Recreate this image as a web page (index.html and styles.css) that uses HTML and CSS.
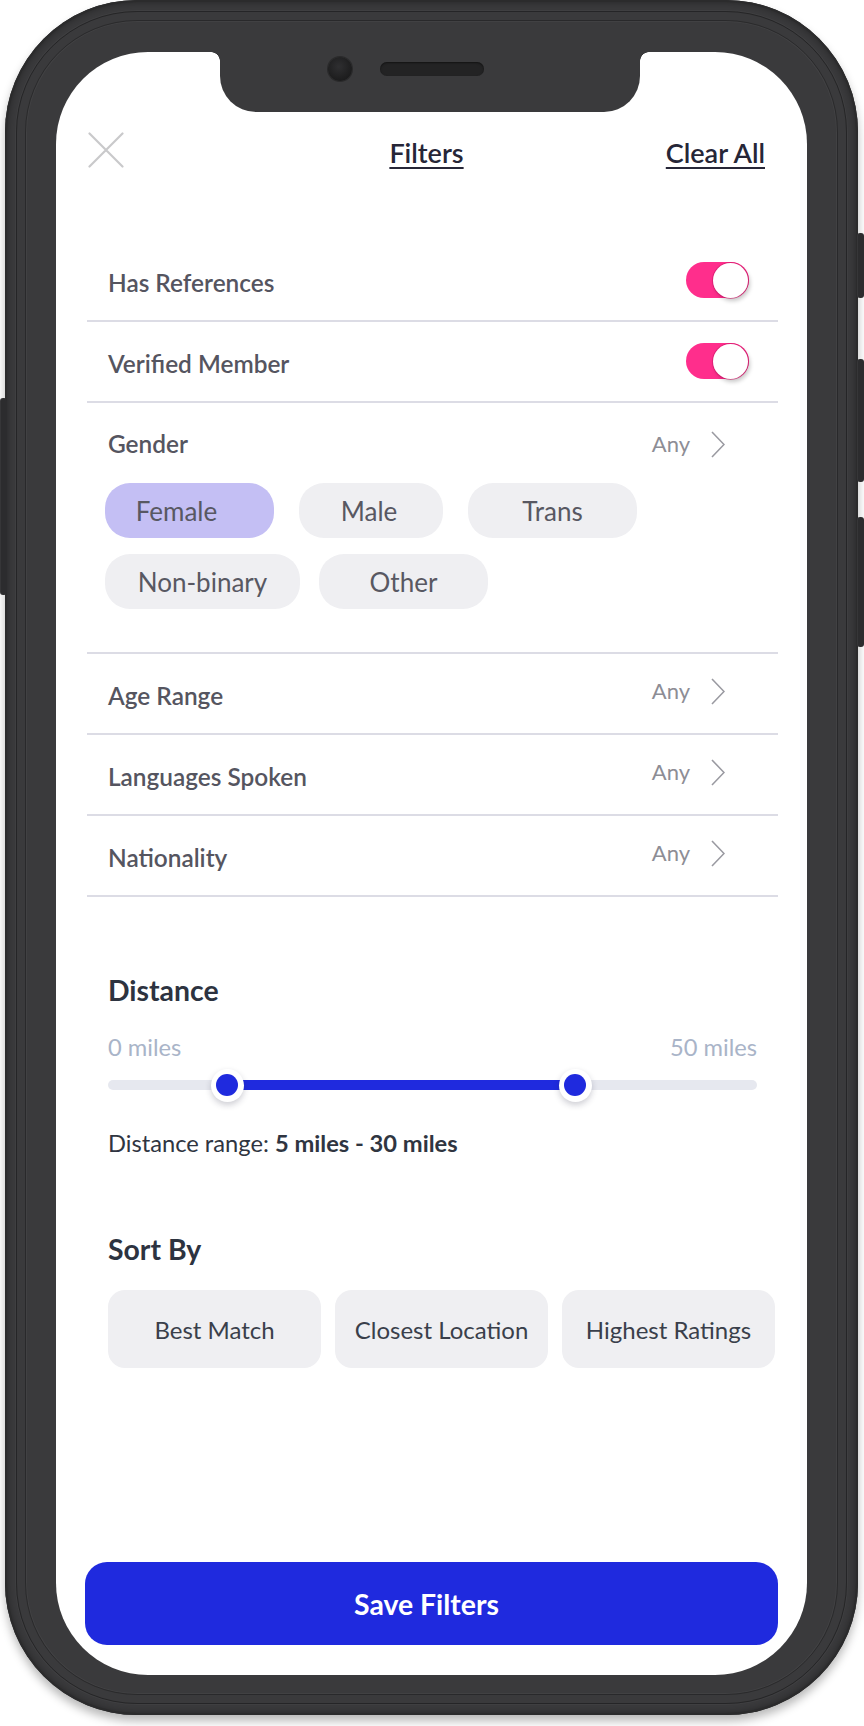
FILE: index.html
```html
<!DOCTYPE html>
<html lang="en">
<head>
<meta charset="utf-8">
<title>Filters</title>
<link rel="stylesheet" href="styles.css">
</head>
<body>
<div class="stage">
  <div class="phone">
    <span class="side-btn side-left"></span>
    <span class="side-btn side-r1"></span>
    <span class="side-btn side-r2"></span>
    <span class="side-btn side-r3"></span>
    <div class="screen">
      <div class="notch"><span class="camera"></span><span class="speaker"></span></div>

      <header class="topbar">
        <svg class="close" width="36" height="36" viewBox="0 0 36 36" aria-label="Close">
          <path d="M1.5 1.5 L34.5 34.5 M34.5 1.5 L1.5 34.5" fill="none" stroke="#c9c9cb" stroke-width="2.2" stroke-linecap="round"/>
        </svg>
        <span class="title">Filters</span>
        <span class="clear">Clear All</span>
      </header>

      <ul class="list">
        <li class="row">
          <span class="label">Has References</span>
          <span class="toggle"><span class="knob"></span></span>
        </li>
        <li class="row">
          <span class="label">Verified Member</span>
          <span class="toggle"><span class="knob"></span></span>
        </li>
        <li class="group">
          <div class="row row-head">
            <span class="label">Gender</span>
            <span class="value">Any
              <svg class="chev" width="14" height="27" viewBox="0 0 14 27"><path d="M1 1 L13 13.5 L1 26" fill="none" stroke="#9a9aa1" stroke-width="1.6"/></svg>
            </span>
          </div>
          <div class="chips">
            <div class="chip-row chip-row-1">
              <span class="chip chip-selected chip-female">Female</span>
              <span class="chip chip-male">Male</span>
              <span class="chip chip-trans">Trans</span>
            </div>
            <div class="chip-row chip-row-2">
              <span class="chip chip-nonbinary">Non-binary</span>
              <span class="chip chip-other">Other</span>
            </div>
          </div>
        </li>
        <li class="row">
          <span class="label">Age Range</span>
          <span class="value value-raised">Any
            <svg class="chev" width="14" height="27" viewBox="0 0 14 27"><path d="M1 1 L13 13.5 L1 26" fill="none" stroke="#9a9aa1" stroke-width="1.6"/></svg>
          </span>
        </li>
        <li class="row">
          <span class="label">Languages Spoken</span>
          <span class="value value-raised">Any
            <svg class="chev" width="14" height="27" viewBox="0 0 14 27"><path d="M1 1 L13 13.5 L1 26" fill="none" stroke="#9a9aa1" stroke-width="1.6"/></svg>
          </span>
        </li>
        <li class="row">
          <span class="label">Nationality</span>
          <span class="value value-raised">Any
            <svg class="chev" width="14" height="27" viewBox="0 0 14 27"><path d="M1 1 L13 13.5 L1 26" fill="none" stroke="#9a9aa1" stroke-width="1.6"/></svg>
          </span>
        </li>
      </ul>

      <section class="section distance">
        <h2 class="heading">Distance</h2>
        <div class="range-labels"><span>0 miles</span><span>50 miles</span></div>
        <div class="slider">
          <div class="track">
            <span class="fill" style="left:18.34%;width:53.62%"></span>
            <span class="thumb" style="left:18.34%"></span>
            <span class="thumb" style="left:71.96%"></span>
          </div>
        </div>
        <p class="range-text">Distance range: <b>5 miles - 30 miles</b></p>
      </section>

      <section class="section sort">
        <h2 class="heading">Sort By</h2>
        <div class="sort-options">
          <span class="sort-btn">Best Match</span>
          <span class="sort-btn">Closest Location</span>
          <span class="sort-btn">Highest Ratings</span>
        </div>
      </section>

      <button class="save" type="button">Save Filters</button>
    </div>
  </div>
</div>
</body>
</html>
```

FILE: styles.css
```css
* { box-sizing: border-box; }

html, body {
  margin: 0;
  padding: 0;
  background: #ffffff;
}

body {
  width: 864px;
  height: 1726px;
  overflow: hidden;
  font-family: "Lato", "Liberation Sans", sans-serif;
}

.stage {
  padding-left: 5px;
}

.phone {
  position: relative;
  width: 853px;
  height: 1715px;
  padding: 52px 51px 40px 51px;
  border-radius: 132px;
  background: #3a3a3c;
  box-shadow:
    inset 0 0 0 2px #2b2b2c,
    inset 0 0 10px rgba(0, 0, 0, 0.55),
    0 6px 10px rgba(0, 0, 0, 0.28);
}

.phone::before {
  content: "";
  position: absolute;
  inset: 11px;
  border-radius: 121px;
  border: 1px solid rgba(0, 0, 0, 0.35);
  box-shadow: 0 0 0 1px rgba(255, 255, 255, 0.03);
  pointer-events: none;
}

.phone::after {
  content: "";
  position: absolute;
  inset: 20px;
  border-radius: 112px;
  border: 1.5px solid rgba(0, 0, 0, 0.28);
  box-shadow: inset 0 0 0 1px rgba(255, 255, 255, 0.04);
  pointer-events: none;
}

.side-btn {
  position: absolute;
  width: 7px;
  background: #2c2c2e;
  border-radius: 3px;
  box-shadow: inset 1px 0 1px rgba(255, 255, 255, 0.06);
}
.side-left { left: -5px; top: 398px; height: 197px; }
.side-r1 { right: -6px; top: 233px; height: 65px; }
.side-r2 { right: -6px; top: 359px; height: 123px; }
.side-r3 { right: -6px; top: 517px; height: 130px; }

.screen {
  position: relative;
  z-index: 1;
  width: 751px;
  height: 1623px;
  background: #ffffff;
  border-radius: 92px;
  overflow: hidden;
  display: flex;
  flex-direction: column;
}

/* notch */
.notch {
  position: absolute;
  left: 164px;
  top: 0;
  width: 420px;
  height: 60px;
  background: #3a3a3c;
  border-radius: 0 0 36px 36px;
}
.notch::before,
.notch::after {
  content: "";
  position: absolute;
  top: 0;
  width: 9px;
  height: 9px;
}
.notch::before {
  left: -9px;
  background: radial-gradient(circle at 0 100%, transparent 8.5px, #3a3a3c 9px);
}
.notch::after {
  right: -9px;
  background: radial-gradient(circle at 100% 100%, transparent 8.5px, #3a3a3c 9px);
}
.camera {
  position: absolute;
  left: 108px;
  top: 5px;
  width: 24px;
  height: 24px;
  border-radius: 50%;
  background: radial-gradient(circle at 45% 40%, #2f2f31 0, #1f1f20 60%, #151516 100%);
  box-shadow: 0 0 0 1px #2a2a2b;
}
.speaker {
  position: absolute;
  left: 160px;
  top: 10px;
  width: 104px;
  height: 14px;
  border-radius: 7px;
  background: #232324;
  box-shadow: inset 0 1px 2px rgba(0, 0, 0, 0.5);
}

/* header */
.topbar {
  display: grid;
  grid-template-columns: 1fr auto 1fr;
  align-items: center;
  height: 36px;
  margin-top: 79px;
  padding: 0 42px 0 32px;
}
.close { display: block; }
.title,
.clear {
  font-size: 27px;
  font-weight: 600;
  color: #262637;
  text-decoration: underline;
  text-decoration-thickness: 2px;
  text-underline-offset: 4px;
  line-height: 30px;
  padding-top: 7px;
}
.clear { justify-self: end; }

/* list */
.list {
  list-style: none;
  margin: 74px 29px 0 31px;
  padding: 0;
}
.row {
  display: flex;
  align-items: center;
  justify-content: space-between;
  height: 81px;
  padding: 3px 29px 0 21px;
  border-bottom: 2px solid #dcdce5;
}
.group {
  border-bottom: 2px solid #dcdce5;
}
.group .row-head {
  height: 80px;
  padding-top: 1px;
  border-bottom: none;
}
.label {
  font-size: 24.4px;
  font-weight: 600;
  color: #555560;
}
.value {
  display: flex;
  align-items: center;
  gap: 21px;
  margin-right: 24px;
  font-size: 22px;
  color: #8d8d95;
}
.value-raised { margin-top: -9px; }
.value .chev { margin-top: 2px; }

.toggle {
  position: relative;
  width: 63px;
  height: 36px;
  border-radius: 18px;
  background: #ff2e8c;
  margin-top: -4px;
}
.knob {
  position: absolute;
  right: 1px;
  top: 1px;
  width: 35px;
  height: 35px;
  border-radius: 50%;
  background: #ffffff;
  box-shadow: 0 0 0 1px rgba(200, 20, 100, 0.55), 2px 3px 4px rgba(0, 0, 0, 0.22);
}

.chips {
  padding: 0 0 43px 18px;
}
.chip-row {
  display: flex;
  column-gap: 25px;
}
.chip-row-2 {
  margin-top: 16px;
  column-gap: 19px;
}
.chip {
  display: flex;
  align-items: center;
  justify-content: center;
  height: 55px;
  border-radius: 25px;
  background: #efeff2;
  font-size: 26px;
  color: #585862;
}
.chip-selected { background: #c4bff4; }
.chip-female { width: 169px; padding-right: 26px; }
.chip-male { width: 144px; padding-right: 4px; }
.chip-trans { width: 169px; }
.chip-nonbinary { width: 195px; }
.chip-other { width: 169px; }

/* sections */
.section {
  padding: 0 50px 0 52px;
}
.heading {
  margin: 0;
  font-size: 28.4px;
  line-height: 34px;
  font-weight: 700;
  color: #2d3340;
}
.distance { margin-top: 76px; }

.range-labels {
  display: flex;
  justify-content: space-between;
  margin-top: 25px;
  font-size: 23.7px;
  line-height: 30px;
  color: #a9b4c8;
}
.slider {
  margin-top: 6px;
  padding: 12px 0;
}
.track {
  position: relative;
  height: 10px;
  border-radius: 5px;
  background: #e6e8ef;
}
.fill {
  position: absolute;
  top: 0;
  height: 10px;
  background: #1f2ade;
}
.thumb {
  position: absolute;
  top: 50%;
  width: 33px;
  height: 33px;
  margin: -16.5px 0 0 -16.5px;
  border-radius: 50%;
  background: #ffffff;
  box-shadow: 0 3px 6px rgba(30, 30, 60, 0.22);
}
.thumb::after {
  content: "";
  position: absolute;
  left: 5.5px;
  top: 5.5px;
  width: 22px;
  height: 22px;
  border-radius: 50%;
  background: #1f2ade;
}
.range-text {
  margin: 26px 0 0;
  font-size: 23.7px;
  line-height: 30px;
  color: #2f3541;
}
.range-text b { font-weight: 700; }

.sort { margin-top: 74px; }
.sort-options {
  display: grid;
  grid-template-columns: repeat(3, 213px);
  column-gap: 14px;
  margin-top: 24px;
}
.sort-btn {
  display: flex;
  align-items: center;
  justify-content: center;
  height: 78px;
  border-radius: 17px;
  background: #efeff2;
  font-size: 24px;
  color: #3a3f4b;
}

.save {
  display: block;
  margin: auto 29px 30px 29px;
  height: 83px;
  padding: 0 10px 0 0;
  border: none;
  border-radius: 22px;
  background: #1f2ade;
  color: #ffffff;
  font-family: "Lato", "Liberation Sans", sans-serif;
  font-size: 28.4px;
  font-weight: 700;
}
```
